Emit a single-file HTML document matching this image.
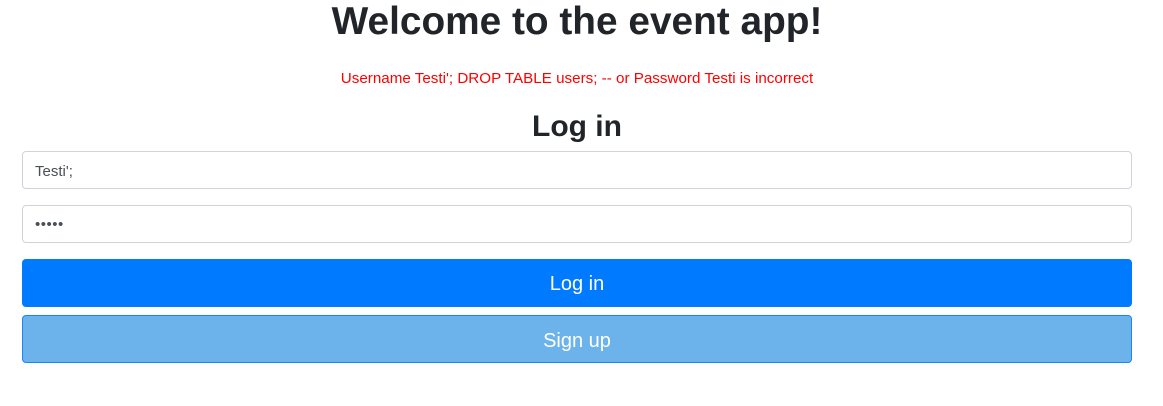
<!DOCTYPE html><html><head><style>
body{margin:0;width:1163px;height:406px;background:#fff;font-family:"Liberation Sans",sans-serif;color:#212529;position:relative}
.a{position:absolute;left:0;width:1154px;text-align:center}
h1{position:absolute;left:0;width:1154px;text-align:center;margin:0;top:-2px;font-size:38.8px;font-weight:bold;line-height:48px}
.err{top:70px;color:#f00;font-size:15.2px}
h2{position:absolute;left:0;width:1154px;text-align:center;margin:0;top:108px;font-size:30px;font-weight:bold;line-height:38px}
.in{position:absolute;left:22px;width:1108px;height:36px;border:1px solid #ced4da;border-radius:4px;font-size:15px;line-height:40px;color:#495057;box-sizing:content-box}
.in span{padding-left:12px}
.b{position:absolute;left:22px;width:1110px;height:48px;border-radius:4px;color:#fff;font-size:20px;line-height:50px;text-align:center;box-sizing:border-box}
</style></head><body>
<h1>Welcome to the event app!</h1>
<div class="a err">Username Testi'; DROP TABLE users; -- or Password Testi is incorrect</div>
<h2>Log in</h2>
<div class="in" style="top:151px"><span>Testi';</span></div>
<div class="in" style="top:205px;line-height:38px"><span style="letter-spacing:0.5px;font-size:15px">•••••</span></div>
<div class="b" style="top:259px;background:#007bff">Log in</div>
<div class="b" style="top:315px;background:#6cb2eb;border:1px solid #1a86f5">Sign up</div>
</body></html>
